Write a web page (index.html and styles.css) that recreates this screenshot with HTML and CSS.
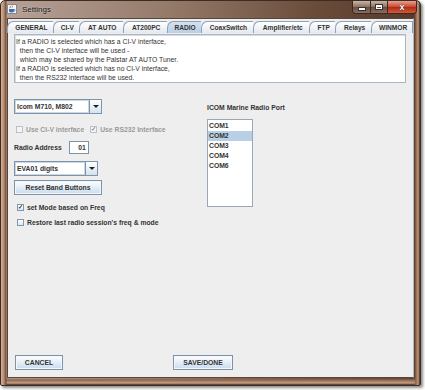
FILE: index.html
```html
<!DOCTYPE html>
<html lang="en">

<head>
    <meta charset="UTF-8">
    <meta name="viewport" content="width=device-width, initial-scale=1.0">
    <title>Settings</title>
    <link rel="stylesheet" href="styles.css">
</head>

<body>

    <div class="window">
        <!-- Title bar -->
        <div class="titlebar">
            <svg class="app-icon" width="10" height="10" viewBox="0 0 10 10">
                <rect x="0.5" y="0.5" width="9" height="9" fill="#f4f4f4" stroke="#7d8a98"/>
                <path d="M3 2 q1 1 0 2 M5 1.5 q1 1 0 2" stroke="#d2452a" stroke-width="0.8" fill="none"/>
                <path d="M2 5 h5 v2 q0 1.5 -2.5 1.5 q-2.5 0 -2.5 -1.5z" fill="#3d6fb3"/>
                <path d="M7 5.5 q1.5 0 1 1.3 q-0.3 0.5 -1 0.5" stroke="#3d6fb3" stroke-width="0.7" fill="none"/>
            </svg>
            <span class="title">Settings</span>
            <div class="controls">
                <div class="ctl ctl-min"><span></span></div>
                <div class="ctl ctl-max"><span></span></div>
                <div class="ctl ctl-close">x</div>
            </div>
        </div>

        <div class="client">
            <!-- Tabs -->
            <div class="tabs">
                <div class="tab" style="width: 46px">GENERAL</div>
                <div class="tab" style="width: 26px">CI-V</div>
                <div class="tab" style="width: 44px">AT AUTO</div>
                <div class="tab" style="width: 44px">AT200PC</div>
                <div class="tab active" style="width: 34px">RADIO</div>
                <div class="tab" style="width: 53px">CoaxSwitch</div>
                <div class="tab" style="width: 56px">Amplifier/etc</div>
                <div class="tab" style="width: 26px">FTP</div>
                <div class="tab" style="width: 36px">Relays</div>
                <div class="tab" style="width: 42px">WINMOR</div>
            </div>

            <div class="panel">
                <div class="info">
                    <div>If a RADIO is selected which has a CI-V interface,</div>
                    <div>&nbsp;&nbsp;then the CI-V interface will be used -</div>
                    <div>&nbsp;&nbsp;which may be shared by the Palstar AT AUTO Tuner.</div>
                    <div>If a RADIO is selected which has no CI-V interface,</div>
                    <div>&nbsp;&nbsp;then the RS232 interface will be used.</div>
                </div>

                <div class="columns">
                    <div class="left-col">
                        <div class="combo combo-radio">
                            <span class="combo-text">Icom M710, M802</span>
                            <span class="combo-btn"><i></i></span>
                        </div>

                        <div class="check-row">
                            <label class="check disabled"><span class="box"></span>Use CI-V interface</label>
                            <label class="check disabled"><span class="box checked">✓</span>Use RS232 Interface</label>
                        </div>

                        <div class="address-row">
                            <span class="label">Radio Address</span>
                            <span class="field">01</span>
                        </div>

                        <div class="combo combo-digits">
                            <span class="combo-text">EVA01 digits</span>
                            <span class="combo-btn"><i></i></span>
                        </div>

                        <button class="btn btn-reset">Reset Band Buttons</button>

                        <label class="check opt"><span class="box checked">✓</span>set Mode based on Freq</label>
                        <label class="check opt"><span class="box"></span>Restore last radio session's freq &amp; mode</label>
                    </div>

                    <div class="right-col">
                        <div class="label">ICOM Marine Radio Port</div>
                        <div class="port-list">
                            <div class="port">COM1</div>
                            <div class="port selected">COM2</div>
                            <div class="port">COM3</div>
                            <div class="port">COM4</div>
                            <div class="port">COM6</div>
                        </div>
                    </div>
                </div>
            </div>

            <!-- Bottom buttons -->
            <div class="footer">
                <button class="btn btn-cancel">CANCEL</button>
                <button class="btn btn-save">SAVE/DONE</button>
            </div>
        </div>
    </div>

</body>

</html>
```

FILE: styles.css
```css
* {
    margin: 0;
    padding: 0;
    box-sizing: border-box;
}

body {
    background-color: #ffffff;
    font-family: 'Liberation Sans', Arial, sans-serif;
    color: #333;
    width: 425px;
    height: 390px;
    overflow: hidden;
}

/* Window frame */
.window {
    width: 421px;
    height: 386px;
    display: flex;
    flex-direction: column;
    padding: 0 6px 7px 6px;
    border: 1px solid #3b2c24;
    border-radius: 5px 5px 2px 2px;
    background:
        linear-gradient(to right, #d3b097 0, #b58a6d 3px, #6e4c3a 5px, transparent 6px),
        linear-gradient(to left, #3e2a20 0, #c59a7c 2px, #8a644c 4px, transparent 6px),
        linear-gradient(to top, #3e2a20 0, #c89f84 2px, #8c6650 5px, transparent 7px),
        linear-gradient(to right, #b8a298 0%, #957a6a 40%, #6a4c3a 75%, #55382a 100%);
    box-shadow: 2px 2px 3px rgba(0, 0, 0, 0.45);
}

.titlebar {
    height: 17px;
    display: flex;
    align-items: center;
    position: relative;
}

.app-icon {
    margin-top: -1px;
}

.title {
    font-size: 8px;
    margin-left: 5px;
    color: #111;
    text-shadow: 0 0 2px rgba(255, 255, 255, 0.7);
}

.controls {
    position: absolute;
    top: 0;
    right: -3px;
    display: flex;
    border: 1px solid #3a2a22;
    border-top: none;
    border-radius: 0 0 4px 4px;
    overflow: hidden;
}

.ctl {
    height: 12px;
    display: flex;
    align-items: center;
    justify-content: center;
    border-left: 1px solid #3a2a22;
}

.ctl:first-child {
    border-left: none;
}

.ctl-min,
.ctl-max {
    width: 17px;
    background: linear-gradient(#c8b4a8, #8c7060 50%, #6a4c3c 51%, #8a6e5e);
}

.ctl-min span {
    width: 6px;
    height: 2px;
    margin-top: 4px;
    background: #fff;
    border: 1px solid #333;
    box-sizing: content-box;
}

.ctl-max span {
    width: 6px;
    height: 4px;
    border: 1px solid #fff;
    border-top-width: 2px;
    outline: 1px solid #333;
}

.ctl-close {
    width: 29px;
    background: linear-gradient(#e8a090, #c8472f 50%, #b02a14 51%, #d05a3a);
    color: #fff;
    font-size: 9px;
    font-weight: bold;
    line-height: 1;
    text-shadow: 0 0 1px #000;
}

/* Client area */
.client {
    flex: 1;
    display: flex;
    flex-direction: column;
    background-color: #eeeeee;
    border: 1px solid #5b4538;
    border-right-color: #a6b8c8;
}

.tabs {
    display: flex;
    margin-top: 2px;
    margin-left: -1px;
    height: 12px;
    border-bottom: 1px solid #8ea3b8;
}

.tab {
    height: 12px;
    font-size: 6.6px;
    font-weight: bold;
    color: #333;
    display: flex;
    align-items: center;
    justify-content: center;
    padding-left: 2px;
    border: 1px solid #8ea3b8;
    border-bottom: none;
    border-right: none;
    border-top-left-radius: 6px 7px;
    background: linear-gradient(#ffffff, #e4e8ee);
}

.tab:last-child {
    border-right: 1px solid #8ea3b8;
}

.tab.active {
    background: linear-gradient(#d4e2ef, #b8cfe5);
}

.panel {
    flex: 1;
    padding: 1px 7px 0 6px;
}

.info {
    height: 49px;
    background-color: #fff;
    border: 1px solid #aab6c2;
    box-shadow: inset 1px 1px 0 #d6dde4;
    padding: 2px 0 0 1px;
    font-size: 6.8px;
    line-height: 9px;
    color: #333;
}

.columns {
    display: flex;
    margin-top: 16px;
}

.left-col {
    width: 193px;
    display: flex;
    flex-direction: column;
    align-items: flex-start;
}

.right-col {
    padding-top: 5px;
}

.label {
    font-size: 6.8px;
    font-weight: bold;
    color: #333;
}

/* Combo boxes */
.combo {
    height: 15px;
    display: flex;
    background: #fff;
    border: 1px solid #7f93a8;
}

.combo-radio {
    width: 88px;
}

.combo-digits {
    width: 84px;
    margin-top: 7px;
}

.combo-text {
    flex: 1;
    font-size: 6.8px;
    font-weight: bold;
    display: flex;
    align-items: center;
    padding-left: 2px;
    box-shadow: inset 0 0 0 1px #c9d8e6;
}

.combo-btn {
    width: 12px;
    border-left: 1px solid #7f93a8;
    background: linear-gradient(#ffffff, #d4e2ef);
    display: flex;
    align-items: center;
    justify-content: center;
}

.combo-btn i {
    width: 0;
    height: 0;
    border-left: 3px solid transparent;
    border-right: 3px solid transparent;
    border-top: 3px solid #222;
}

/* Checkboxes */
.check {
    display: flex;
    align-items: center;
    font-size: 6.8px;
    font-weight: bold;
    color: #333;
}

.check.disabled {
    color: #9a9a9a;
}

.box {
    width: 7px;
    height: 7px;
    border: 1px solid #8197ad;
    background: linear-gradient(#ffffff, #dde6ef);
    margin-right: 3px;
    font-size: 6px;
    line-height: 5px;
    text-align: center;
    color: #333;
}

.disabled .box {
    border-color: #b8c2cc;
    background: #f4f4f4;
    color: #888;
}

.check-row {
    display: flex;
    gap: 6px;
    margin-top: 12px;
    margin-left: 2px;
}

.address-row {
    display: flex;
    align-items: center;
    margin-top: 8px;
}

.field {
    width: 20px;
    height: 13px;
    margin-left: 7px;
    background: #fff;
    border: 1px solid #7f93a8;
    font-size: 6.8px;
    font-weight: bold;
    text-align: right;
    padding-right: 2px;
    line-height: 11px;
}

/* Buttons */
.btn {
    height: 15px;
    font-family: 'Liberation Sans', Arial, sans-serif;
    font-size: 6.8px;
    font-weight: bold;
    color: #333;
    border: 1px solid #7f93a8;
    background: linear-gradient(#ffffff, #c8dbee);
    box-shadow: inset 0 0 0 1px #f2f7fc;
}

.btn-reset {
    width: 88px;
    margin-top: 4px;
}

.opt {
    margin-top: 8px;
    margin-left: 3px;
}

.btn-reset + .opt {
    margin-top: 9px;
}

/* Port list */
.port-list {
    width: 46px;
    height: 88px;
    margin-top: 8px;
    background: #fff;
    border: 1px solid #9aa8b6;
    padding-top: 1px;
}

.port {
    height: 10px;
    font-size: 6.8px;
    font-weight: bold;
    color: #333;
    padding-left: 1px;
    line-height: 10px;
}

.port.selected {
    background-color: #b8cfe5;
}

/* Footer */
.footer {
    display: flex;
    padding: 0 0 7px 7px;
}

.btn-cancel {
    width: 48px;
}

.btn-save {
    width: 60px;
    margin-left: 110px;
}
```
